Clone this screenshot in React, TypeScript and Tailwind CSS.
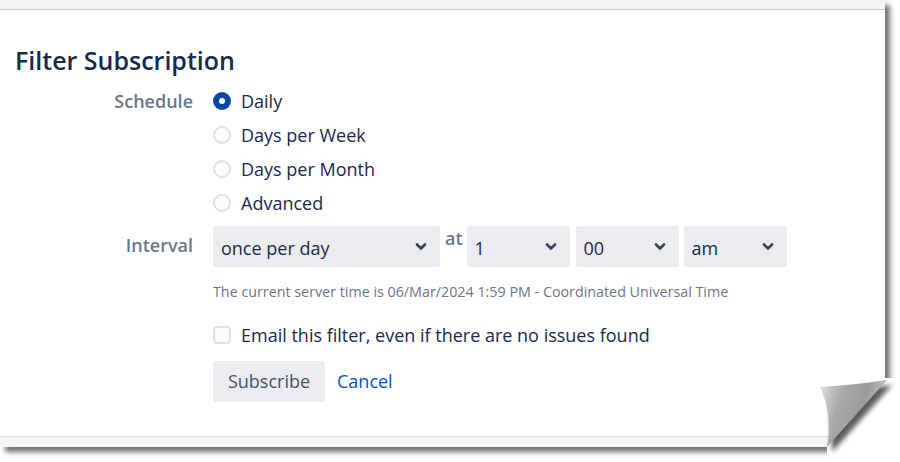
import React from "react";

const labelCls =
  "text-right text-[18px] font-semibold text-[#6b778c] leading-[34px]";

function Chevron() {
  return (
    <svg width="12" height="8" viewBox="0 0 12 8" className="shrink-0">
      <path
        d="M2 1.5 L6 5.5 L10 1.5"
        fill="none"
        stroke="#344563"
        strokeWidth="2.6"
        strokeLinecap="round"
        strokeLinejoin="round"
      />
    </svg>
  );
}

function Select({ value, width }: { value: string; width: string }) {
  return (
    <div
      className={`${width} h-[41px] rounded-[3px] bg-[#ebecf0] flex items-center justify-between pl-2 pr-[13px]`}
    >
      <span className="text-[18px] text-[#172b4d] leading-none pt-[2px]">{value}</span>
      <Chevron />
    </div>
  );
}

function Radio({ checked, label }: { checked?: boolean; label: string }) {
  return (
    <div className="h-[34px] flex items-center gap-[10px]">
      {checked ? (
        <span className="w-[18px] h-[18px] rounded-full bg-[#0747a6] flex items-center justify-center">
          <span className="w-[6px] h-[6px] rounded-full bg-white" />
        </span>
      ) : (
        <span className="w-[18px] h-[18px] rounded-full bg-[#fafbfc] border-2 border-[#dfe1e6]" />
      )}
      <span className="text-[18px] text-[#172b4d]">{label}</span>
    </div>
  );
}

function PageCurl() {
  return (
    <svg
      className="absolute left-[800px] top-[370px]"
      width="100"
      height="92"
      viewBox="0 0 100 92"
    >
      <defs>
        <linearGradient id="curl" x1="0" y1="0" x2="1" y2="0.3">
          <stop offset="0" stopColor="#e4e4e4" />
          <stop offset="0.35" stopColor="#a9a9a9" />
          <stop offset="0.7" stopColor="#9a9a9a" />
          <stop offset="1" stopColor="#c9c9c9" />
        </linearGradient>
        <filter id="blur" x="-20%" y="-20%" width="140%" height="140%">
          <feGaussianBlur stdDeviation="2.5" />
        </filter>
      </defs>
      <polygon points="85,8 100,8 100,92 27,92 27,77" fill="#ffffff" />
      <path d="M30,22 L92,15 L32,82 Z" fill="#5a5a5a" filter="url(#blur)" />
      <polygon points="85,8 100,8 100,12 89,12" fill="#ffffff" />
      <path d="M20,17 Q55,15 87,10 L27,77 Q33,46 20,17 Z" fill="url(#curl)" />
    </svg>
  );
}

export default function App() {
  return (
    <div className="w-[900px] h-[462px] bg-white overflow-hidden font-['Open_Sans','Noto_Sans',sans-serif]">
      <div className="relative w-[885px] h-[447px] bg-white shadow-[5px_5px_5px_rgba(0,0,0,0.55)] flex flex-col">
        <div className="h-[10px] bg-[#f4f5f7] border-b border-[#c1c7d0]" />

        <h1 className="mt-[34px] ml-[15px] text-[25px] leading-[32px] font-semibold text-[#172b4d]">
          Filter Subscription
        </h1>

        <div className="mt-[8px] pl-[15px] grid grid-cols-[178px_1fr] gap-x-[20px]">
          <div className={labelCls}>Schedule</div>
          <div className="flex flex-col">
            <Radio checked label="Daily" />
            <Radio label="Days per Week" />
            <Radio label="Days per Month" />
            <Radio label="Advanced" />
          </div>

          <div className={`${labelCls} mt-[8px]`}>Interval</div>
          <div className="mt-[6px] flex flex-col">
            <div className="flex items-start">
              <Select value="once per day" width="w-[227px]" />
              <span className="ml-[5px] mr-[4px] text-[18px] font-semibold text-[#6b778c] leading-[24px]">
                at
              </span>
              <Select value="1" width="w-[103px]" />
              <div className="ml-[6px]">
                <Select value="00" width="w-[103px]" />
              </div>
              <div className="ml-[5px]">
                <Select value="am" width="w-[103px]" />
              </div>
            </div>
            <div className="mt-[15px] text-[14.3px] leading-[20px] text-[#6b778c]">
              The current server time is 06/Mar/2024 1:59 PM - Coordinated Universal Time
            </div>
            <div className="mt-[16px] h-[34px] flex items-center gap-[10px]">
              <span className="w-[18px] h-[18px] rounded-[4px] bg-[#fafbfc] border-2 border-[#dfe1e6]" />
              <span className="text-[18px] text-[#172b4d]">
                Email this filter, even if there are no issues found
              </span>
            </div>
            <div className="mt-[9px] flex items-center gap-[12px]">
              <button className="h-[41px] w-[112px] rounded-[3px] bg-[#ebecf0] text-[18px] text-[#42526e]">
                Subscribe
              </button>
              <span className="text-[18px] text-[#0052cc]">Cancel</span>
            </div>
          </div>
        </div>

        <div className="mt-auto h-[11px] bg-[#f4f5f7] border-t border-[#dfe1e6]" />
        <PageCurl />
      </div>
    </div>
  );
}
